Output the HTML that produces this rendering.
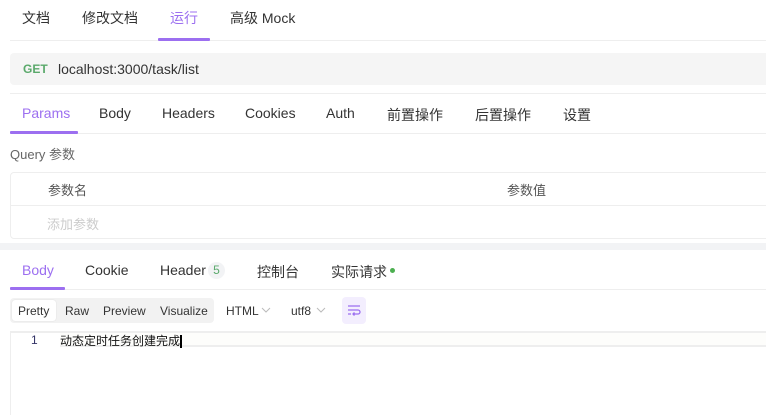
<!DOCTYPE html>
<html><head><meta charset="utf-8"><style>
*{margin:0;padding:0;box-sizing:border-box}
body{width:766px;height:415px;overflow:hidden;background:#fff;font-family:"Liberation Sans","Noto Sans CJK SC",sans-serif;color:#333;position:relative}
.a{position:absolute;white-space:nowrap}
.t{font-size:14px}
.hr{position:absolute;left:10px;right:0;height:1px;background:#eee}
.ul{position:absolute;height:3px;background:#9c6ff0;border-radius:1px}
.p{color:#9c6ff0}
</style></head><body>
<div class="a t" style="left:22px;top:8px">文档</div>
<div class="a t" style="left:82px;top:8px">修改文档</div>
<div class="a t p" style="left:170px;top:8px">运行</div>
<div class="a t" style="left:230px;top:8px">高级 Mock</div>
<div class="hr" style="top:40px"></div>
<div class="ul" style="left:158px;width:52px;top:38px"></div>

<div class="a" style="left:10px;top:53px;right:0;height:32px;background:#f5f5f5;border-radius:4px 0 0 4px"></div>
<div class="a" style="left:23px;top:62px;font-size:12px;font-weight:bold;color:#5aa96b">GET</div>
<div class="a t" style="left:58px;top:61px">localhost:3000/task/list</div>
<div class="hr" style="top:93px"></div>

<div class="a t p" style="left:22px;top:105px">Params</div>
<div class="a t" style="left:99px;top:105px">Body</div>
<div class="a t" style="left:162px;top:105px">Headers</div>
<div class="a t" style="left:245px;top:105px">Cookies</div>
<div class="a t" style="left:326px;top:105px">Auth</div>
<div class="a t" style="left:387px;top:105px">前置操作</div>
<div class="a t" style="left:475px;top:105px">后置操作</div>
<div class="a t" style="left:563px;top:105px">设置</div>
<div class="hr" style="top:133px"></div>
<div class="ul" style="left:10px;width:68px;top:131px"></div>

<div class="a" style="left:10px;top:144px;font-size:13px;color:#666">Query 参数</div>
<div class="a" style="left:10px;top:172px;right:-5px;height:67px;border:1px solid #eee;border-radius:4px"></div>
<div class="a" style="left:11px;top:205px;right:0;height:1px;background:#eee"></div>
<div class="a" style="left:48px;top:180px;font-size:13px;color:#555">参数名</div>
<div class="a" style="left:507px;top:180px;font-size:13px;color:#555">参数值</div>
<div class="a" style="left:47px;top:214px;font-size:13px;color:#ccc">添加参数</div>
<div class="a" style="left:0;top:243px;right:0;height:7px;background:#f2f3f5"></div>

<div class="a t p" style="left:22px;top:262px">Body</div>
<div class="a t" style="left:85px;top:262px">Cookie</div>
<div class="a t" style="left:160px;top:262px">Header</div>
<div class="a" style="left:208px;top:262px;width:17px;height:17px;border-radius:9px;background:#f2f3f5;color:#5aa96b;font-size:12px;text-align:center;line-height:17px">5</div>
<div class="a t" style="left:257px;top:262px">控制台</div>
<div class="a t" style="left:331px;top:262px">实际请求</div>
<div class="a" style="left:390px;top:268px;width:5px;height:5px;border-radius:3px;background:#4caf50"></div>
<div class="hr" style="top:289px"></div>
<div class="ul" style="left:10px;width:55px;top:287px"></div>

<div class="a" style="left:10px;top:298px;width:204px;height:25px;background:#f2f2f2;border-radius:4px"></div>
<div class="a" style="left:12px;top:300px;width:44px;height:21px;background:#fff;border-radius:3px;box-shadow:0 0 1px #ccc"></div>
<div class="a" style="left:18px;top:304px;font-size:12px">Pretty</div>
<div class="a" style="left:65px;top:304px;font-size:12px">Raw</div>
<div class="a" style="left:103px;top:304px;font-size:12px">Preview</div>
<div class="a" style="left:160px;top:304px;font-size:12px">Visualize</div>
<div class="a" style="left:226px;top:304px;font-size:12px">HTML</div>
<svg class="a" style="left:261px;top:307px" width="10" height="6"><path d="M1 1l4 4 4-4" fill="none" stroke="#bbb"/></svg>
<div class="a" style="left:291px;top:304px;font-size:12px">utf8</div>
<svg class="a" style="left:316px;top:307px" width="10" height="6"><path d="M1 1l4 4 4-4" fill="none" stroke="#bbb"/></svg>
<div class="a" style="left:342px;top:297px;width:24px;height:27px;background:#f3eefe;border-radius:4px"></div>
<svg class="a" style="left:346px;top:304px" width="16" height="13" viewBox="0 0 16 13" fill="none" stroke="#9c6ff0" stroke-width="1.3"><path d="M2 2h12M2 6h10a2 2 0 0 1 0 4H7M8.5 8.5L7 10l1.5 1.5M2 10h3"/></svg>

<div class="a" style="left:10px;top:331px;right:0;height:2px;background:#eee"></div>
<div class="a" style="left:10px;top:333px;right:0;height:82px;border-left:1px solid #eee"></div>
<div class="a" style="left:60px;top:333px;right:0;height:14px;background:#fdfdfb;border-bottom:2px solid #eee"></div>
<div class="a" style="left:31px;top:333px;font-size:12px;color:#336">1</div>
<div class="a" style="left:60px;top:332px;font-size:12px;color:#111">动态定时任务创建完成<span style="display:inline-block;width:2px;height:13px;background:#000;vertical-align:middle"></span></div>
</body></html>
